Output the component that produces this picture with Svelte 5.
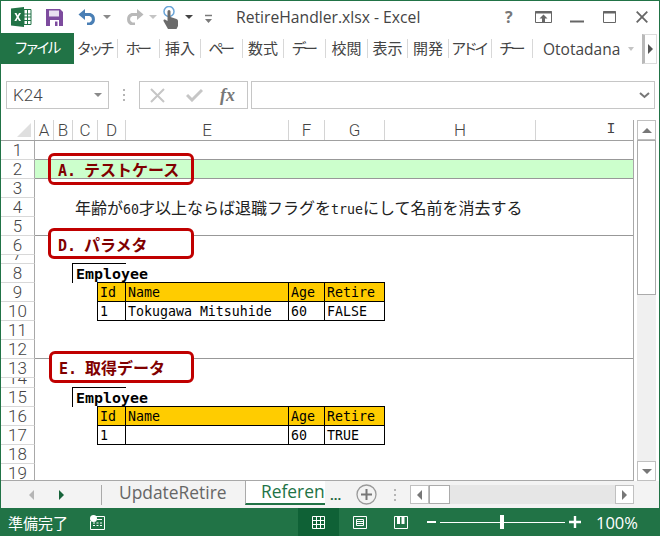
<script>
  const ribbonTabs = [
    { label: 'タッチ', w: 44, kana: true },
    { label: 'ホー', w: 42, kana: true },
    { label: '挿入', w: 41 },
    { label: 'ペー', w: 42, kana: true },
    { label: '数式', w: 41 },
    { label: 'デー', w: 42, kana: true },
    { label: '校閲', w: 42 },
    { label: '表示', w: 40 },
    { label: '開発', w: 41 },
    { label: 'アドイ', w: 43, kana: true },
    { label: 'チー', w: 41, kana: true }
  ];

  const columns = [
    { label: 'A', w: 19 },
    { label: 'B', w: 19 },
    { label: 'C', w: 25 },
    { label: 'D', w: 28 },
    { label: 'E', w: 163 },
    { label: 'F', w: 36 },
    { label: 'G', w: 60 },
    { label: 'H', w: 151 },
    { label: 'I', w: 152 }
  ];
  const template = columns.map((c) => c.w + 'px').join(' ');

  // col is 1 based from column A
  const head = (col, text) => ({ col, text, kind: 'head' });
  const body = (col, text) => ({ col, text, kind: 'body' });
  const tableCols = [4, 5, 6, 7];

  const headerRow = ['Id', 'Name', 'Age', 'Retire'].map((t, i) => head(tableCols[i], t));

  const rows = [
    { n: 1 },
    { n: 2, band: true },
    { n: 3 },
    { n: 4, note: true },
    { n: 5, rule: true },
    { n: 6 },
    { n: 7, h: 9 },
    { n: 8, title: true },
    { n: 9, cells: headerRow },
    { n: 10, cells: ['1', 'Tokugawa Mitsuhide', '60', 'FALSE'].map((t, i) => body(tableCols[i], t)) },
    { n: 11 },
    { n: 12, rule: true },
    { n: 13 },
    { n: 14, h: 10 },
    { n: 15, title: true },
    { n: 16, cells: headerRow },
    { n: 17, cells: ['1', '', '60', 'TRUE'].map((t, i) => body(tableCols[i], t)) },
    { n: 18 },
    { n: 19 }
  ];

  const shapes = [
    { key: 'a', cls: 'shape-a', tag: 'A.', text: 'テストケース' },
    { key: 'd', cls: 'shape-d', tag: 'D.', text: 'パラメタ' },
    { key: 'e', cls: 'shape-e', tag: 'E.', text: '取得データ' }
  ];
</script>

<div class="window">
  <header class="titlebar">
    <svg class="xl" width="21" height="20" viewBox="0 0 21 20">
      <path d="M9 2.500h11v15H9z" fill="#fff" stroke="#217346" />
      <path d="M13 3v14M9 7h11M9 10h11M9 13.500h11M16.500 3v14" stroke="#217346" fill="none" />
      <path d="M0 1.500 13 0v20L0 18.500z" fill="#217346" />
      <path d="M3.500 6h2l1.200 2.500L8 6h2L7.700 10 10 14H8L6.700 11.500 5.400 14h-2l2.300-4z" fill="#fff" />
    </svg>
    <svg class="save" width="17" height="17" viewBox="0 0 17 17">
      <path d="M0 0h14l3 3v14H0z" fill="#7d4b9e" />
      <path d="M3 1.500h10v6H3z" fill="#e9dff0" />
      <path d="M4 11h9v6H4z" fill="#fff" />
      <path d="M9 12.500h2.500V17H9z" fill="#7d4b9e" />
    </svg>
    <svg class="undo" width="20" height="16" viewBox="0 0 20 16">
      <path d="M2 5.500h10a5 5 0 0 1 0 9.500H9" fill="none" stroke="#4a7fb5" stroke-width="3" />
      <path d="M7 0v11L0.500 5.500z" fill="#4a7fb5" />
    </svg>
    <i class="caret undo-caret"></i>
    <svg class="redo" width="20" height="16" viewBox="0 0 20 16">
      <path d="M18 5.500H8a5 5 0 0 0 0 9.500h3" fill="none" stroke="#b9b9b9" stroke-width="3" />
      <path d="M13 0v11l6.500-5.500z" fill="#b9b9b9" />
    </svg>
    <i class="caret pale redo-caret"></i>
    <svg class="touch" width="16" height="23" viewBox="0 0 16 23">
      <circle cx="6" cy="5.500" r="5" fill="none" stroke="#6aa5d8" stroke-width="1.500" />
      <path d="M4.500 5.500a1.500 1.500 0 0 1 3 0V11l6 2q1.500.5 1.500 2v5l-1.500 3H5L0.500 15q-.5-2 1.500-1.500l2.500 1.500z" fill="#6b6b6b" />
    </svg>
    <i class="caret dark touch-caret"></i>
    <svg class="qat" width="9" height="10" viewBox="0 0 9 10">
      <path d="M1 1.500h7" stroke="#7a7a7a" stroke-width="1.500" />
      <path d="M1 5h7L4.500 9z" fill="#7a7a7a" />
    </svg>
    <span class="doc-title">RetireHandler.xlsx - Excel</span>
    <span class="help">?</span>
    <svg class="display" width="17" height="12" viewBox="0 0 17 12">
      <path d="M.5.500h16v11H.5z" fill="none" stroke="#666" />
      <path d="M0 1.500h17" stroke="#666" stroke-width="2" />
      <path d="M8.500 3.500 12.500 7.500H10V11H7V7.500H4.500z" fill="#666" />
    </svg>
    <svg class="min" width="14" height="12" viewBox="0 0 14 12"><path d="M0 10.500h14" stroke="#666" stroke-width="2" /></svg>
    <svg class="max" width="13" height="12" viewBox="0 0 13 12">
      <path d="M.5.500h12v11H.5z" fill="none" stroke="#666" />
      <path d="M0 1.500h13" stroke="#666" stroke-width="2" />
    </svg>
    <svg class="close" width="12" height="12" viewBox="0 0 12 12"><path d="M.7.700l10.600 10.600M11.300.7.700 11.300" stroke="#666" stroke-width="1.800" /></svg>
  </header>

  <nav class="ribbon">
    <div class="file">ファイル</div>
    {#each ribbonTabs as tab}
      <div class="rtab" class:kana={tab.kana} style="width: {tab.w}px">{tab.label}</div>
    {/each}
    <div class="account">Ototadana</div>
    <i class="caret pale account-caret"></i>
    <div class="more"><i class="tri-right"></i></div>
  </nav>

  <section class="formula">
    <div class="namebox"><span>K24</span><i class="caret"></i></div>
    <div class="grip"><b></b><b></b><b></b></div>
    <div class="fx-box">
      <svg width="15" height="15" viewBox="0 0 15 15"><path d="M1 1l13 13M14 1 1 14" stroke="#c6c6c6" stroke-width="2" /></svg>
      <svg width="17" height="14" viewBox="0 0 17 14"><path d="M1 7l5 5L16 2" fill="none" stroke="#c6c6c6" stroke-width="3" /></svg>
      <span class="fx">fx</span>
    </div>
    <div class="fx-input">
      <svg width="11" height="7" viewBox="0 0 11 7"><path d="M1 1l4.500 4L10 1" fill="none" stroke="#777" stroke-width="2" /></svg>
    </div>
  </section>

  <section class="sheet">
    <div class="grid">
      <div class="colhead">
        <div class="corner"><i></i></div>
        <div class="cols" style="grid-template-columns: {template}">
          {#each columns as col}
            <div class="col" class:beam={col.label === 'I'}>{col.label}</div>
          {/each}
        </div>
      </div>

      {#each rows as row}
        <div class="row" class:band={row.band} class:rule={row.rule} style="height: {row.h ?? 19}px">
          <div class="rownum"><span>{row.n}</span></div>
          <div class="cells" style="grid-template-columns: {template}">
            {#if row.note}
              <div class="note">
                年齢が<span class="mono">60</span>才以上ならば退職フラグを<span class="mono">true</span>にして名前を消去する
              </div>
            {/if}
            {#if row.title}
              <div class="table-title">Employee</div>
            {/if}
            {#each row.cells ?? [] as cell}
              <div class="cell {cell.kind}" style="grid-column: {cell.col}">{cell.text}</div>
            {/each}
          </div>
        </div>
      {/each}

      {#each shapes as shape (shape.key)}
        <div class="shape {shape.cls}"><span class="tag">{shape.tag}</span>{shape.text}</div>
      {/each}
    </div>

    <div class="vscroll">
      <div class="sbtn"><i class="tri-up"></i></div>
      <div class="vthumb"></div>
      <div class="vtrack"></div>
      <div class="sbtn"><i class="tri-down"></i></div>
    </div>
  </section>

  <section class="tabs">
    <i class="tri-left nav-prev"></i>
    <i class="tri-right green nav-next"></i>
    <div class="tab-sep"></div>
    <div class="sheet-tab">UpdateRetire</div>
    <div class="sheet-tab active"><span>Referen</span></div>
    <div class="ellipsis">...</div>
    <svg class="add" width="21" height="21" viewBox="0 0 21 21">
      <circle cx="10.500" cy="10.500" r="9.500" fill="none" stroke="#9a9a9a" stroke-width="1.300" />
      <path d="M10.500 5v11M5 10.500h11" stroke="#777" stroke-width="2" />
    </svg>
    <div class="grip tab-grip"><b></b><b></b><b></b></div>
    <div class="hscroll">
      <div class="hbtn"><i class="tri-left dark"></i></div>
      <div class="hthumb"></div>
      <div class="htrack"></div>
      <div class="hbtn"><i class="tri-right dark"></i></div>
    </div>
  </section>

  <footer class="status">
    <span class="ready">準備完了</span>
    <svg class="macro" width="15" height="15" viewBox="0 0 15 15">
      <path d="M3.500 1.500h11v13H.5V6" fill="none" stroke="#fff" />
      <circle cx="3.500" cy="3.500" r="3.500" fill="#fff" />
      <path d="M3 8h2M6.500 8h2M10 8h2M3 10.500h2M6.500 10.500h2M10 10.500h2M7 4.500h5" stroke="#fff" />
    </svg>
    <div class="view active">
      <svg width="13" height="13" viewBox="0 0 13 13"><path d="M.5.500h12v12H.5zM4.500.5v12M8.500.5v12M.5 4.500h12M.5 8.500h12" fill="none" stroke="#fff" /></svg>
    </div>
    <div class="view">
      <svg width="14" height="13" viewBox="0 0 14 13"><path d="M.5.500h13v12H.5zM3.500 3.500h7v6h-7zM4 5.500h6M4 7.500h6" fill="none" stroke="#fff" /></svg>
    </div>
    <div class="view">
      <svg width="14" height="13" viewBox="0 0 14 13">
        <path d="M.5.500h13v12H.5z" fill="none" stroke="#fff" />
        <path d="M3 0h3v8H3zM7.500 0h3v8h-3z" fill="#fff" />
      </svg>
    </div>
    <div class="zoom-minus"></div>
    <div class="slider"><i></i></div>
    <svg class="zoom-plus" width="12" height="12" viewBox="0 0 12 12"><path d="M6 0v12M0 6h12" stroke="#fff" stroke-width="2.400" /></svg>
    <span class="percent">100%</span>
  </footer>
</div>

<style>
  :global(body) {
    margin: 0;
  }

  .window {
    width: 660px;
    height: 536px;
    box-sizing: border-box;
    border: solid #217346;
    border-width: 1px 1px 0 1px;
    background: #fff;
    display: flex;
    flex-direction: column;
    overflow: hidden;
    font-family: "Open Sans", "Noto Sans CJK JP", sans-serif;
    color: #444;
  }

  i {
    display: block;
    flex: none;
  }

  .titlebar {
    height: 32px;
    flex: none;
    display: flex;
    align-items: center;
  }

  .xl { margin-left: 10px; }
  .save { margin-left: 14px; }
  .undo { margin-left: 15px; }
  .redo { margin-left: 13px; }
  .touch { margin: 1px 0 0 6px; }
  .qat { margin: 3px 0 0 11px; }

  .caret {
    width: 0;
    height: 0;
    border: 4px solid transparent;
    border-top-color: #8a8a8a;
    border-bottom: 0;
  }
  .caret.pale { border-top-color: #c4c4c4; }
  .caret.dark { border-top-color: #444; }
  .undo-caret { margin: 0 0 0 5px; }
  .redo-caret { margin: 0 0 0 5px; }
  .touch-caret { margin: 0 0 0 6px; }

  .doc-title {
    margin-left: 23px;
    width: 269px;
    font-size: 15.700px;
    white-space: nowrap;
    flex: none;
  }

  .help {
    font-size: 16px;
    font-weight: 700;
    color: #777;
    width: 30px;
    flex: none;
  }
  .min { margin-left: 18px; }
  .max { margin-left: 19px; }
  .close { margin-left: 20px; }

  .ribbon {
    height: 31px;
    flex: none;
    display: flex;
    align-items: center;
  }

  .file {
    width: 73px;
    height: 31px;
    line-height: 30px;
    background: #217346;
    color: #fff;
    text-align: center;
    font-size: 14.500px;
    letter-spacing: -3.500px;
    text-indent: -3px;
    flex: none;
  }

  .rtab {
    height: 19px;
    line-height: 19px;
    box-sizing: border-box;
    border-right: 1px solid #d8d8d8;
    text-align: center;
    font-size: 15px;
    flex: none;
    white-space: nowrap;
  }
  .rtab.kana {
    letter-spacing: -3.500px;
    text-indent: -3px;
  }

  .account {
    margin-left: 10px;
    font-size: 15.500px;
    width: 85px;
    flex: none;
  }
  .account-caret { border-width: 4px 3.500px 0; }

  .more {
    margin-left: 8px;
    width: 15px;
    height: 30px;
    box-sizing: border-box;
    border: 1px solid #dcdcdc;
    border-left: 3px solid #b9b9b9;
    display: flex;
    align-items: center;
    justify-content: center;
    flex: none;
  }

  .tri-right, .tri-left {
    width: 0;
    height: 0;
    border: 5px solid transparent;
  }
  .tri-right {
    border-left: 5px solid #555;
    border-right: 0;
  }
  .tri-left {
    border-right: 5px solid #b5b5b5;
    border-left: 0;
  }
  .tri-right.green { border-left-color: #17633a; }
  .tri-right.dark { border-left-color: #777; }
  .tri-left.dark { border-right-color: #777; }

  .formula {
    height: 56px;
    flex: none;
    box-sizing: border-box;
    padding: 17px 4px 0 5px;
    display: flex;
    align-items: flex-start;
  }

  .namebox {
    width: 103px;
    height: 28px;
    box-sizing: border-box;
    border: 1px solid #c6c6c6;
    display: flex;
    align-items: center;
    justify-content: space-between;
    padding: 0 6px 0 6px;
    font-family: "Roboto", sans-serif;
    font-size: 17px;
    font-weight: 300;
    flex: none;
  }

  .grip {
    display: flex;
    flex-direction: column;
    gap: 3px;
    flex: none;
  }
  .grip b {
    display: block;
    width: 2px;
    height: 2px;
    background: #b5b5b5;
  }
  .formula > .grip {
    margin: 8px 14px 0 14px;
  }

  .fx-box {
    width: 109px;
    height: 28px;
    box-sizing: border-box;
    border: 1px solid #c6c6c6;
    display: flex;
    align-items: center;
    padding-left: 10px;
    gap: 21px;
    flex: none;
  }

  .fx {
    font-family: "Liberation Serif", serif;
    font-style: italic;
    font-weight: 700;
    font-size: 18px;
    color: #777;
    margin-left: -4px;
  }

  .fx-input {
    margin-left: 3px;
    flex: 1;
    height: 28px;
    box-sizing: border-box;
    border: 1px solid #c6c6c6;
    display: flex;
    align-items: center;
    justify-content: flex-end;
    padding-right: 4px;
  }

  .sheet {
    height: 361px;
    flex: none;
    display: flex;
    font-family: "DejaVu Sans Mono", "Noto Sans CJK JP", monospace;
    color: #000;
  }

  .grid {
    position: relative;
    width: 633px;
    height: 361px;
    flex: none;
    overflow: hidden;
    box-sizing: border-box;
    border-right: 1px solid #a8a8a8;
    border-bottom: 1px solid #a8a8a8;
  }

  .colhead {
    height: 21px;
    display: flex;
    box-sizing: border-box;
    border-bottom: 1px solid #a0a0a0;
  }

  .corner {
    width: 34px;
    box-sizing: border-box;
    border-right: 1px solid #d0d0d0;
    flex: none;
    position: relative;
  }
  .corner i {
    position: absolute;
    right: 3px;
    bottom: 3px;
    width: 0;
    height: 0;
    border-style: solid;
    border-width: 0 0 14px 14px;
    border-color: transparent transparent #dfdfdf transparent;
  }

  .cols, .cells {
    display: grid;
    flex: none;
  }

  .col {
    box-sizing: border-box;
    border-right: 1px solid #d4d4d4;
    text-align: center;
    font-family: "Roboto", sans-serif;
    font-weight: 300;
    font-size: 17px;
    line-height: 20px;
    color: #444;
  }
  .col.beam {
    border-right: 0;
    font-family: "Liberation Mono", monospace;
    font-size: 15px;
    padding-right: 2px;
  }

  .row {
    display: flex;
    box-sizing: border-box;
  }
  .row.band .cells {
    background: #ccffcc;
    box-shadow: 0 -1px 0 #989898, inset 0 -1px 0 #989898;
  }
  .row.rule .cells {
    box-shadow: inset 0 -1px 0 #989898;
  }

  /* short rows show the bottom of the number, as Excel does */
  .rownum {
    width: 34px;
    flex: none;
    box-sizing: border-box;
    border-right: 1px solid #a8a8a8;
    border-bottom: 1px solid #d8d8d8;
    display: flex;
    align-items: flex-end;
    justify-content: center;
    overflow: hidden;
    font-family: "Roboto", sans-serif;
    font-weight: 300;
    font-size: 17px;
    line-height: 18px;
    color: #444;
  }

  .cells {
    position: relative;
    width: 598px;
    overflow: visible;
    align-items: stretch;
  }

  .note {
    grid-column: 3 / 8;
    margin-left: 2px;
    font-family: "Noto Sans CJK JP", sans-serif;
    font-size: 16px;
    line-height: 19px;
    white-space: nowrap;
    color: #222;
  }

  .mono {
    font-family: "DejaVu Sans Mono", monospace;
    font-size: 13.280px;
  }

  .table-title {
    grid-column: 3 / 5;
    margin: -1px 0 0 -1px;
    border-left: 1px solid #000;
    border-top: 1px solid #000;
    padding: 1px 0 0 3px;
    font-weight: 700;
    font-size: 14.950px;
    line-height: 18px;
    white-space: nowrap;
  }

  .cell {
    margin: -1px 0 0 -1px;
    border: 1px solid #000;
    padding: 1px 0 0 2px;
    font-size: 13.280px;
    line-height: 18px;
    white-space: nowrap;
    overflow: hidden;
  }
  .cell.head {
    background: #ffcc00;
  }

  .shape {
    position: absolute;
    left: 47px;
    box-sizing: border-box;
    width: 146px;
    height: 32px;
    border: 3px solid #c00000;
    border-radius: 6px;
    padding-left: 7px;
    background: transparent;
    color: #800000;
    font-family: "Noto Sans CJK JP", sans-serif;
    font-weight: 700;
    font-size: 16px;
    line-height: 26px;
    white-space: nowrap;
  }
  .shape .tag {
    font-family: "DejaVu Sans Mono", monospace;
    font-size: 15px;
    display: inline-block;
    width: 26px;
  }
  .shape-a { top: 33px; }
  .shape-d { top: 108px; height: 31px; background: #fff; }
  .shape-e { top: 231px; left: 48px; width: 145px; height: 32px; background: #fff; }

  .vscroll {
    margin-left: 3px;
    width: 19px;
    height: 361px;
    display: flex;
    flex-direction: column;
    flex: none;
    background: #f0f0f0;
  }

  .sbtn {
    height: 20px;
    box-sizing: border-box;
    border: 1px solid #c0c0c0;
    background: #fff;
    display: flex;
    align-items: center;
    justify-content: center;
    flex: none;
  }
  .tri-up, .tri-down {
    width: 0;
    height: 0;
    border: 5px solid transparent;
  }
  .tri-up {
    border-bottom: 5px solid #777;
    border-top: 0;
  }
  .tri-down {
    border-top: 5px solid #777;
    border-bottom: 0;
  }

  .vthumb {
    height: 155px;
    box-sizing: border-box;
    border: 1px solid #ababab;
    background: #fff;
    flex: none;
  }
  .vtrack { flex: 1; }

  .tabs {
    height: 27px;
    flex: none;
    display: flex;
    align-items: center;
    background: #f3f3f3;
    position: relative;
  }

  .nav-prev { margin-left: 28px; }
  .nav-next { margin-left: 25px; }

  .tab-sep {
    width: 1px;
    height: 20px;
    background: #aaa;
    margin-left: 37px;
    flex: none;
  }

  .sheet-tab {
    margin-left: 17px;
    width: 126px;
    font-family: "Open Sans", sans-serif;
    font-size: 17.400px;
    color: #666;
    white-space: nowrap;
    flex: none;
    line-height: 21px;
    margin-top: -4px;
  }

  .sheet-tab.active {
    margin: 0;
    width: 80px;
    height: 24px;
    align-self: flex-start;
    box-sizing: border-box;
    background: #fff;
    border-left: 1px solid #aaa;
    border-bottom: 2px solid #217346;
    padding-left: 15px;
    color: #217346;
    overflow: hidden;
  }

  .ellipsis {
    margin-left: 5px;
    width: 26px;
    font-family: "Open Sans", sans-serif;
    font-weight: 700;
    font-size: 13px;
    color: #17633a;
    flex: none;
  }

  .add { flex: none; }
  .tab-grip { margin-left: 17px; }

  .hscroll {
    margin-left: 14px;
    width: 224px;
    height: 19px;
    display: flex;
    background: #e6e6e6;
    flex: none;
  }
  .hbtn {
    width: 19px;
    box-sizing: border-box;
    border: 1px solid #c0c0c0;
    background: #fff;
    display: flex;
    align-items: center;
    justify-content: center;
    flex: none;
  }
  .hthumb {
    width: 21px;
    box-sizing: border-box;
    border: 1px solid #ababab;
    background: #fff;
    flex: none;
  }
  .htrack { flex: 1; }

  .status {
    height: 28px;
    flex: none;
    display: flex;
    align-items: center;
    background: #217346;
    color: #fff;
  }

  .ready {
    margin-left: 7px;
    font-size: 15px;
    width: 82px;
    flex: none;
  }

  .macro { flex: none; margin-right: 193px; }

  .view {
    width: 41px;
    height: 28px;
    display: flex;
    align-items: center;
    justify-content: center;
    flex: none;
  }
  .view.active { background: #0f6136; }

  .zoom-minus {
    margin-left: 6px;
    width: 9px;
    height: 2.500px;
    background: #fff;
    flex: none;
  }

  .slider {
    position: relative;
    margin-left: 4px;
    width: 125px;
    height: 1px;
    background: #fff;
    flex: none;
  }
  .slider i {
    position: absolute;
    left: 60px;
    top: -7px;
    width: 4px;
    height: 14px;
    background: #fff;
  }

  .zoom-plus { margin-left: 4px; flex: none; }

  .percent {
    margin-left: 15px;
    font-size: 16.500px;
    flex: none;
  }
</style>
